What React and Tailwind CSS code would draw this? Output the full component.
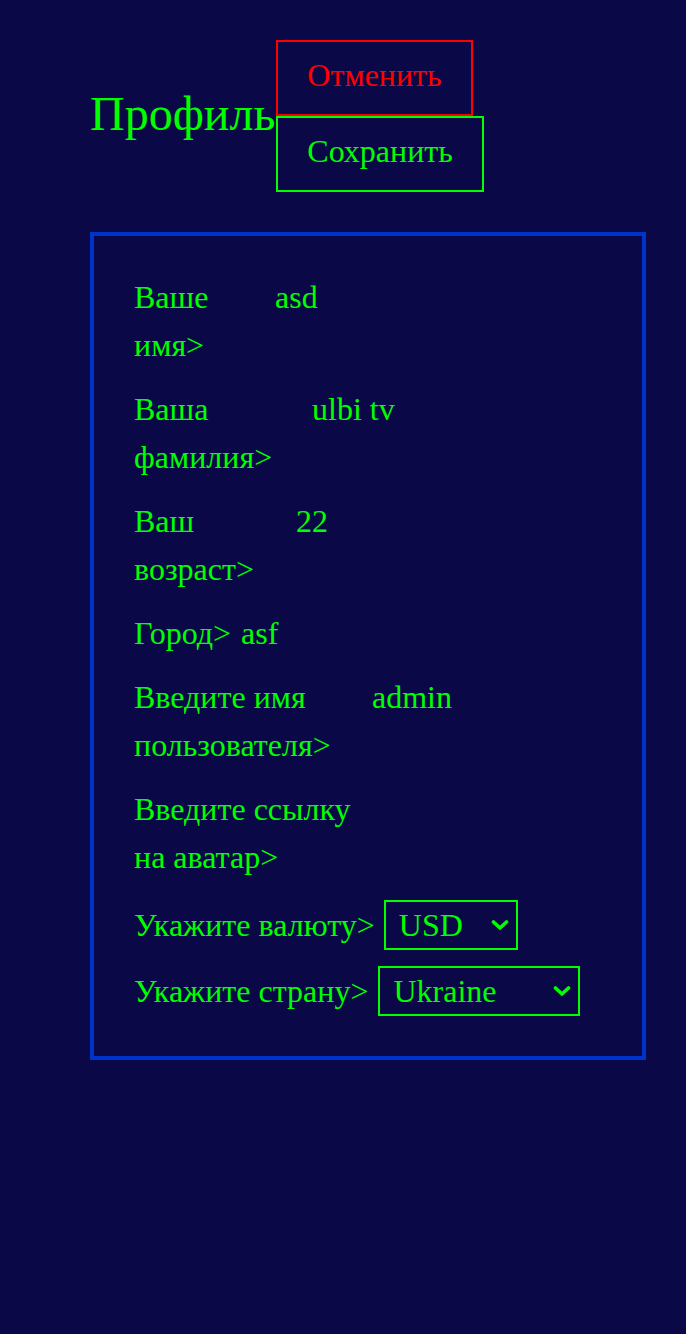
import React from 'react';

const rows = [
  { label: 'Ваше имя>', value: 'asd', w: 'w-[141px]' },
  { label: 'Ваша фамилия>', value: 'ulbi tv', w: 'w-[178px]' },
  { label: 'Ваш возраст>', value: '22', w: 'w-[162px]' },
  { label: 'Город>', value: 'asf', w: 'w-[107px]' },
  { label: 'Введите имя пользователя>', value: 'admin', w: 'w-[238px]' },
  { label: 'Введите ссылку на аватар>', value: '', w: 'w-[232px]' },
];

const Field = ({ label, value, w }) => (
  <div className="flex">
    <div className={`${w} shrink-0`}>{label}</div>
    <input
      className="flex-1 min-w-0 h-[48px] outline-none text-[#00ff00]"
      defaultValue={value}
    />
  </div>
);

const Chevron = () => (
  <svg
    className="absolute right-[9px] top-1/2 -translate-y-1/2 pointer-events-none"
    width="18"
    height="11"
    viewBox="0 0 18 11"
    fill="none"
  >
    <path d="M2.5 2.5 L9 8.5 L15.5 2.5" stroke="#00ff00" strokeWidth="3.6" strokeLinecap="round" strokeLinejoin="round" />
  </svg>
);

const SelectRow = ({ label, options, value, w, gap }) => (
  <div className={`flex items-center ${gap}`}>
    <span>{label}</span>
    <div className={`relative ${w}`}>
      <select
        defaultValue={value}
        className="appearance-none w-full h-[50px] border-2 border-[#00ff00] pl-[13px] text-[32px] leading-[36px] text-[#00ff00] bg-transparent outline-none"
      >
        {options.map((o) => (
          <option key={o} value={o} className="bg-[#0a0847]">
            {o}
          </option>
        ))}
      </select>
      <Chevron />
    </div>
  </div>
);

export default function App() {
  return (
    <div
      className="min-h-[1334px] bg-[#0a0847] text-[#00ff00] pl-[90px] pr-[40px] pt-[40px]"
      style={{ fontFamily: '"Liberation Serif", "Times New Roman", serif' }}
    >
      {/* Header */}
      <div className="flex items-center">
        <h1 className="text-[48px] leading-[56px] font-normal -mt-[4px] pr-[1px]">Профиль</h1>
        <div className="flex flex-col items-start">
          <button className="border-2 border-[#ff0000] text-[#ff0000] text-[32px] leading-[36px] px-[29px] pt-[15px] pb-[21px]">
            Отменить
          </button>
          <button className="border-2 border-[#00ff00] text-[32px] leading-[36px] px-[29px] pt-[15px] pb-[21px]">
            Сохранить
          </button>
        </div>
      </div>

      {/* Card */}
      <div className="mt-[40px] border-4 border-[#0033cc] px-[40px] pt-[37px] pb-[40px] text-[32px] leading-[48px] flex flex-col gap-[16px]">
        {rows.map((r) => (
          <Field key={r.label} {...r} />
        ))}
        <div className="flex flex-col gap-[16px] mt-[3px]">
          <SelectRow
            label="Укажите валюту>"
            options={['USD', 'EUR', 'RUB']}
            value="USD"
            w="w-[134px]"
            gap="gap-[9px]"
          />
          <SelectRow
            label="Укажите страну>"
            options={['Ukraine', 'Russia', 'Belarus', 'Armenia']}
            value="Ukraine"
            w="w-[202px]"
            gap="gap-[10px]"
          />
        </div>
      </div>
    </div>
  );
}
